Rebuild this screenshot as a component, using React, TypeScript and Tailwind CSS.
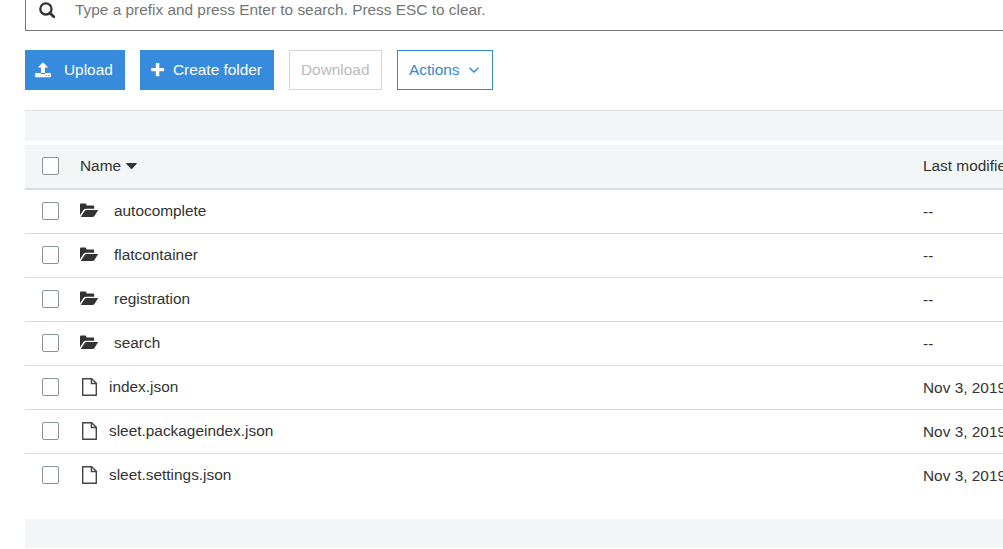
type Entry = { name: string; folder: boolean; modified: string };

const entries: Entry[] = [
  { name: 'autocomplete', folder: true, modified: '--' },
  { name: 'flatcontainer', folder: true, modified: '--' },
  { name: 'registration', folder: true, modified: '--' },
  { name: 'search', folder: true, modified: '--' },
  { name: 'index.json', folder: false, modified: 'Nov 3, 2019' },
  { name: 'sleet.packageindex.json', folder: false, modified: 'Nov 3, 2019' },
  { name: 'sleet.settings.json', folder: false, modified: 'Nov 3, 2019' },
];

function SearchIcon() {
  return (
    <svg className="h-[17px] w-[17px] shrink-0" viewBox="0 0 17 17" fill="none" stroke="#333">
      <circle cx="6.9" cy="6.9" r="5.6" strokeWidth="2.3" />
      <path d="M11.2 11.200l3.600 3.600" strokeWidth="2.800" strokeLinecap="round" />
    </svg>
  );
}

function UploadIcon() {
  return (
    <svg className="h-4 w-[17px] shrink-0" viewBox="0 0 17 16" fill="#fff">
      <path d="M8 .2l5.200 5.400H10V11H6V5.600H2.800z" />
      <path
        fillRule="evenodd"
        d="M1 11h4.800v1h4.400v-1H15a1 1 0 0 1 1 1v2.300a1 1 0 0 1-1 1H1a1 1 0 0 1-1-1V12a1 1 0 0 1 1-1zM10.700 12.900v1h1v-1zM13.200 12.900v1h1v-1z"
      />
    </svg>
  );
}

function PlusIcon() {
  return (
    <svg className="h-[14px] w-[14px] shrink-0" viewBox="0 0 14 14" fill="#fff">
      <path d="M5.500 0h2.100a.7.7 0 0 1 .7.7V5h4.200a.7.7 0 0 1 .7.7v1.900a.7.7 0 0 1-.7.7H8.300v4.200a.7.7 0 0 1-.7.7H5.500a.7.7 0 0 1-.7-.7V8.300H.700a.7.7 0 0 1-.7-.7V5.700A.7.7 0 0 1 .7 5h4.100V.7a.7.7 0 0 1 .7-.7z" />
    </svg>
  );
}

function ChevronIcon() {
  return (
    <svg className="h-[6px] w-[10px] shrink-0" viewBox="0 0 10 6" fill="none" stroke="#2f88da" strokeWidth="1.4">
      <path d="M.5.7L5 5 9.500.7" />
    </svg>
  );
}

function CaretIcon() {
  return (
    <svg className="h-[6px] w-[11px] shrink-0" viewBox="0 0 11 6" fill="#333">
      <path d="M.8 0h9.400c.6 0 .8.6.4 1L6.100 5.700a.8.8 0 0 1-1.200 0L.4 1C0 .6.200 0 .8 0z" />
    </svg>
  );
}

function FolderIcon() {
  return (
    <svg className="h-[15px] w-[18px] shrink-0" viewBox="0 0 18 15" fill="#333">
      <path d="M0 12.300V1.500Q0 .5 1 .5H5.200Q6.100.5 6.300 1.400L6.600 2.400H13Q14.200 2.400 14.200 3.500V5.700H6.300Q4.500 5.700 3.400 7.100z" />
      <path d="M.7 14.100L4.500 8.200Q5.300 6.900 6.700 6.900H17.500Q18.300 6.900 17.800 7.700L14.400 13Q13.700 14.100 12.500 14.100z" />
    </svg>
  );
}

function FileIcon() {
  return (
    <svg className="h-[18px] w-[15px] shrink-0" viewBox="0 0 15 18" fill="none" stroke="#444" strokeWidth="1.400">
      <path d="M.7.7H9.700L14.300 5.300V17.300H.7z" strokeLinejoin="round" />
      <path d="M9.400.9V5.500H14" />
    </svg>
  );
}

function Checkbox() {
  return (
    <button
      role="checkbox"
      aria-checked="false"
      className="ml-[17px] h-[18px] w-[17px] shrink-0 rounded-[2px] border border-[#879596] bg-white"
    />
  );
}

export default function App() {
  return (
    <div className="h-[549px] w-full overflow-hidden bg-white pl-[25px] font-['Liberation_Sans',Arial,sans-serif] text-[15.4px] leading-5 text-[#333]">
      <div className="flex h-[31px] items-start border-b border-l border-[#777] pl-[13px]">
        <div className="pt-[2px]">
          <SearchIcon />
        </div>
        <span className="ml-[19px] whitespace-nowrap text-[#757575]">
          Type a prefix and press Enter to search. Press ESC to clear.
        </span>
      </div>

      <div className="mt-[19px] flex h-10 gap-[15px] whitespace-nowrap">
        <button className="flex w-[100px] items-center bg-[#368bdc] pl-[10px] text-white">
          <span className="pb-px">
            <UploadIcon />
          </span>
          <span className="ml-3">Upload</span>
        </button>
        <button className="flex w-[134px] items-center bg-[#368bdc] pl-[11px] text-white">
          <PlusIcon />
          <span className="ml-2">Create folder</span>
        </button>
        <button className="flex w-[93px] items-center border border-[#d5d5d5] pl-[11px] text-[#bbb]">
          Download
        </button>
        <button className="flex w-[96px] items-center border border-[#2f88da] pl-[11px] text-[#2f88da]">
          <span className="mr-[10px]">Actions</span>
          <ChevronIcon />
        </button>
      </div>

      <div className="mt-5 h-[31px] border-t border-[#e0e0e0] bg-[#f2f6f7]" />

      <div className="mt-1">
        <div className="flex h-[45px] items-center border-b-2 border-[#d9dbdb] bg-[#f2f6f7] pb-[2px]">
          <Checkbox />
          <div className="ml-[21px] flex w-[843px] shrink-0 items-center gap-[5px]">
            <span>Name</span>
            <CaretIcon />
          </div>
          <span className="shrink-0 whitespace-nowrap">Last modified</span>
        </div>

        {entries.map((entry) => (
          <div
            key={entry.name}
            className="flex h-11 items-center border-b border-[#d9dbdb] pb-[2px] last:border-transparent"
          >
            <Checkbox />
            <div className="ml-[21px] flex w-[843px] shrink-0 items-center">
              {entry.folder ? (
                <>
                  <FolderIcon />
                  <span className="ml-4">{entry.name}</span>
                </>
              ) : (
                <>
                  <span className="ml-[2px]">
                    <FileIcon />
                  </span>
                  <span className="ml-3">{entry.name}</span>
                </>
              )}
            </div>
            <span className="shrink-0 whitespace-nowrap pt-[2px]">{entry.modified}</span>
          </div>
        ))}
      </div>

      <div className="mt-[21px] h-[29px] bg-[#f2f6f7]" />
    </div>
  );
}
